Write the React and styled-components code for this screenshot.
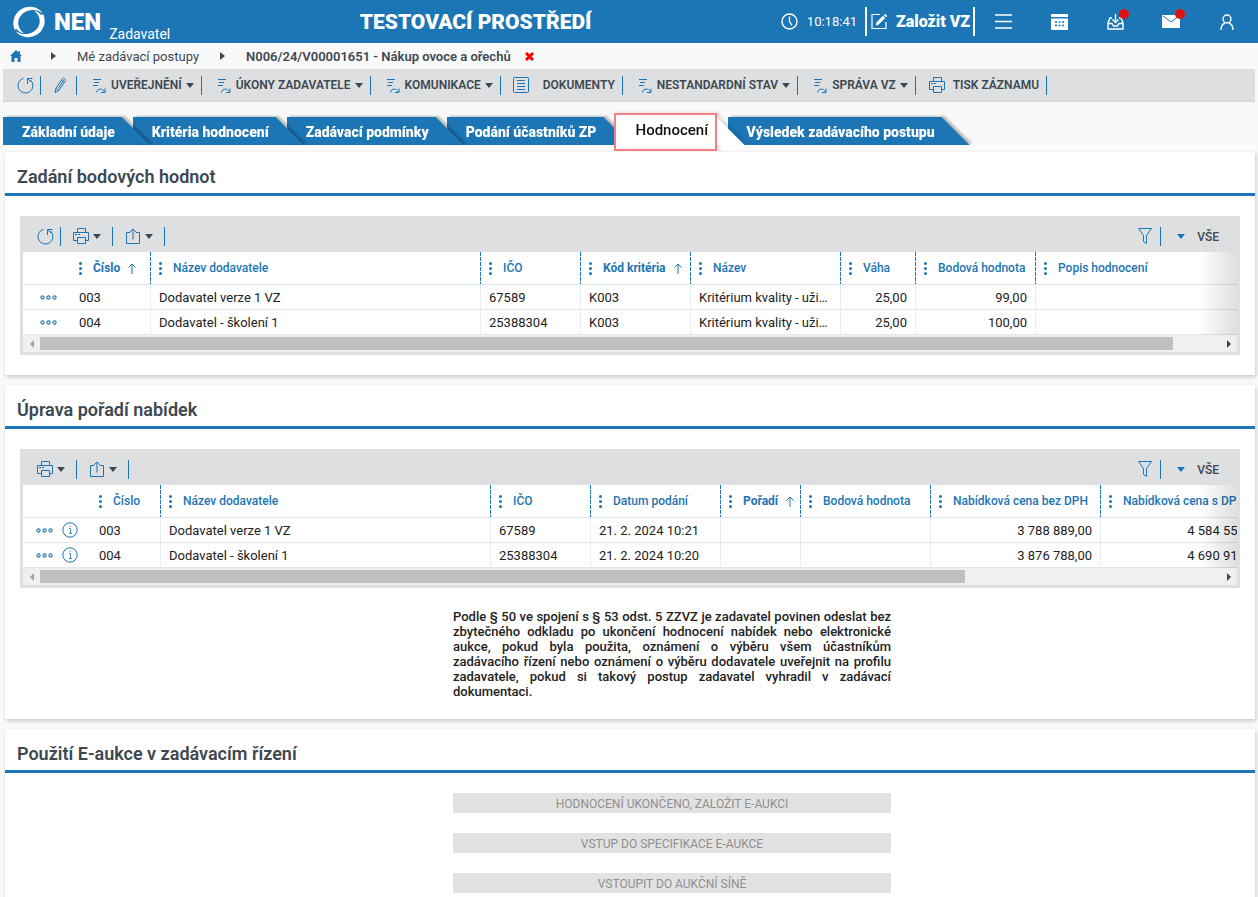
import React from "react";
import styled, { createGlobalStyle, css } from "styled-components";

const blue = "#1c75b4";
const dark = "#3d4851";
const grey = "#dedfe1";
const line = "#dfe8ee";

const GlobalStyle = createGlobalStyle`
  *, *::before, *::after { box-sizing: border-box; }
  body {
    margin: 0;
    background: #f9f9f9;
    color: #222;
    font-family: Roboto, "Liberation Sans", sans-serif;
    font-size: 13px;
  }
  button { font: inherit; color: inherit; background: none; border: 0; padding: 0; }
  a { color: inherit; text-decoration: none; }
  h1, h2, p { margin: 0; }
  svg { display: block; flex: none; }
`;

/* ---------- icons ---------- */

const Icon = ({ w = 16, h = 16, sw = 1, children, ...rest }) => (
  <svg width={w} height={h} viewBox={`0 0 ${w} ${h}`} fill="none" stroke="currentColor" strokeWidth={sw} aria-hidden="true" {...rest}>
    {children}
  </svg>
);

const crescent = "M2.800 24.500A16 16 0 0 1 30 8C24 3.500 16 3.800 10.800 8C6 12 4.200 18 5.500 24.500C4.500 23 3.500 23 2.800 24.500z";
const LogoIcon = () => (
  <svg width="34" height="34" viewBox="0 0 33 33" fill="#fff" aria-hidden="true">
    <path d={crescent} />
    <path d={crescent} transform="rotate(180 16.500 16.500)" />
    <path d="M9 9C4.500 14 5 23 11.500 27.500C8 27 5 24.500 3.500 21.500L3 14z" />
    <path d="M24 24C28.500 19 28 10 21.500 5.500C25 6 28 8.500 29.500 11.500L30 19z" />
  </svg>
);
const RefreshIcon = () => (
  <Icon w={17} h={17}>
    <path d="M6.500 1.300A7.500 7.500 0 1 0 13.500 3" />
    <path d="M15.500 1.500h-5v5.500M10.800 1.800l3.200 3.200" />
  </Icon>
);
const PencilIcon = () => (
  <Icon w={13} h={17}>
    <path d="M1 15.500l.8-4L8.300 1.800c1-1.400 4 .4 3 2.200L4.800 13.500zM1.800 11.500l3 2M9.500 3.500l-5.300 8M7.300 3.200l3 2" />
  </Icon>
);
const ActionIcon = () => (
  <Icon w={14} h={15}>
    <path d="M1 1.500h8M2 4.500h5M1 7.500h5" />
    <path d="M4.500 14.500c1-4.500 6-4.500 8-.5M13 10.500v4h-4" />
  </Icon>
);
const DocIcon = () => (
  <Icon w={16} h={16}>
    <rect x="0.5" y="0.5" width="15" height="15" rx="1" />
    <path d="M4 3.500h8M4 6.500h8M4 9.500h8M4 12.500h8" />
  </Icon>
);
const PrinterIcon = () => (
  <Icon w={16} h={17}>
    <path d="M4.500 4.500v-4h8v4M4.500 12.500h-4v-8h15v8h-3M4.500 9.500h8v6h-8z" />
    <path d="M2 6.500h2M5 6.500h2" />
  </Icon>
);
const ShareIcon = () => (
  <Icon w={14} h={17}>
    <path d="M4 4.500H.5v11h13v-11H10M7 11.500V1M4 4l3-3 3 3" />
  </Icon>
);
const FunnelIcon = () => (
  <Icon w={14} h={17}>
    <path d="M.5.500h13l-5 7v8l-3-2v-6z" />
  </Icon>
);
const SortUpIcon = () => (
  <Icon w={8} h={11}>
    <path d="M4 11V1M.5 4.500L4 1l3.500 3.500" />
  </Icon>
);
const DotsIcon = () => (
  <Icon w={17} h={5} sw={1.1}>
    <circle cx="2.5" cy="2.5" r="1.600" />
    <circle cx="8.500" cy="2.500" r="1.600" />
    <circle cx="14.500" cy="2.500" r="1.600" />
  </Icon>
);
const InfoIcon = () => (
  <Icon w={16} h={16}>
    <circle cx="8" cy="8" r="7.200" />
    <path d="M7 6.500h1.500v5M7 11.500h3M8 3.500v1.500" strokeWidth=".8" />
  </Icon>
);
const MenuHandle = () => (
  <svg width="3" height="13" viewBox="0 0 3 13" fill={blue} aria-hidden="true">
    <circle cx="1.500" cy="1.500" r="1.500" />
    <circle cx="1.500" cy="6.500" r="1.500" />
    <circle cx="1.500" cy="11.500" r="1.500" />
  </svg>
);
const ClockIcon = () => (
  <Icon w={17} h={17} sw={1.4}>
    <circle cx="8.500" cy="8.500" r="7.500" />
    <path d="M8.500 3.500v5l2.500 4" />
  </Icon>
);
const EditIcon = () => (
  <Icon w={17} h={17} sw={1.2}>
    <path d="M9 1.500H1v14h14V9" />
    <path d="M5.500 9.500l6.500-6.500 2 2-6.500 6.500-2.500.5zM13 2l1-1 2 2-1 1z" fill="currentColor" strokeWidth=".5" />
  </Icon>
);
const BurgerIcon = () => (
  <Icon w={17} h={15} sw={1.5}>
    <path d="M0 1h17M0 7.500h17M0 14h17" />
  </Icon>
);
const CalendarIcon = () => (
  <Icon w={17} h={16}>
    <path d="M0 0h17v3H0zM0 4.500h17V16H0z" fill="currentColor" stroke="none" />
    <path d="M4 8h2M7.500 8h2M11 8h2M4 11.500h2M7.500 11.500h2M11 11.500h2" stroke={blue} strokeWidth="1.500" />
  </Icon>
);
const InboxIcon = () => (
  <Icon w={17} h={16} sw={1.4}>
    <path d="M5 4H3L1 9v6h15V9l-2-5h-2M1 9.500h4l1.500 2.500h4L12 9.500h4M8.500 0v8.500M5.500 5.500l3 3 3-3" />
  </Icon>
);
const MailIcon = () => (
  <Icon w={18} h={13}>
    <path d="M0 0h18v13H0z" fill="currentColor" stroke="none" />
    <path d="M1 1l8 6 8-6" stroke={blue} />
  </Icon>
);
const UserIcon = () => (
  <Icon w={14} h={16} sw={1.4}>
    <circle cx="7" cy="5" r="4" />
    <path d="M1 16c0-3.500 1.500-6 4-7M13 16c0-3.500-1.500-6-4-7" />
  </Icon>
);

/* ---------- header ---------- */

const Header = styled.header`
  display: flex;
  align-items: center;
  height: 43px;
  padding: 0 3px 0 12px;
  background: ${blue};
  color: #fff;
`;
const Brand = styled.a`
  display: flex;
  align-items: center;
  height: 43px;
`;
const BrandName = styled.span`
  margin: 0 8px;
  font-size: 24px;
  font-weight: 900;
`;
const BrandRole = styled.span`
  align-self: flex-end;
  font-size: 14px;
  line-height: 18px;
`;
const Environment = styled.h1`
  flex: 1;
  text-align: center;
  font-size: 21px;
  font-weight: 900;
  line-height: 24px;
`;
const Clock = styled.time`
  display: flex;
  align-items: center;
  gap: 9px;
  margin-right: 8px;
  font-size: 13px;
`;
const CreateButton = styled.button`
  display: flex;
  align-items: center;
  gap: 8px;
  height: 29px;
  padding: 0 3px 0 4px;
  border: solid #fff;
  border-width: 0 2px;
  font-size: 16px;
  font-weight: 900;
`;
const HeaderButton = styled.button`
  position: relative;
  display: grid;
  place-items: center;
  width: 56px;
  height: 43px;
`;
const Badge = styled.span`
  position: absolute;
  top: 9px;
  right: 14px;
  width: 10px;
  height: 10px;
  border-radius: 50%;
  background: #e01010;
`;

/* ---------- breadcrumb ---------- */

const Breadcrumb = styled.nav`
  display: flex;
  align-items: center;
  height: 26px;
  padding-left: 10px;
  color: ${dark};
`;
const HomeLink = styled.a`
  color: ${blue};
`;
const CrumbArrow = styled.span`
  margin: 0 21px;
  border: solid transparent;
  border-width: 4px 0 4px 5px;
  border-left-color: ${dark};
  &:first-of-type { margin-left: 29px; }
`;
const Crumb = styled.a`
  font-weight: ${(p) => (p.$current ? 600 : 400)};
`;
const CloseButton = styled.button`
  margin-left: 14px;
  color: #f00;
`;

/* ---------- toolbars ---------- */

const Toolbar = styled.div`
  display: flex;
  align-items: center;
  height: 33px;
  margin: 0 3px;
  padding-left: 14px;
  border-bottom: 1px solid #d2d3d5;
  background: ${grey};
`;
const ToolButton = styled.button`
  display: flex;
  align-items: center;
  height: 19px;
  gap: ${(p) => p.$gap || 5}px;
  padding: 0 ${(p) => p.$right ?? 7}px 0 ${(p) => p.$left ?? 15}px;
  border-right: 1px solid ${blue};
  color: ${blue};
`;
const ToolLabel = styled.span`
  display: flex;
  align-items: center;
  gap: 4px;
  color: ${dark};
  font-size: 12px;
  font-weight: 600;
  text-transform: uppercase;
`;
const Caret = styled.span`
  border: solid transparent;
  border-width: 5px 4px 0;
  border-top-color: ${(p) => p.$color || dark};
`;

/* ---------- tabs ---------- */

const Tabs = styled.nav`
  display: flex;
  align-items: flex-end;
  height: 48px;
  margin: 0 3px;
  padding-bottom: 5px;
  background: linear-gradient(#fff, #fff) bottom / 100% 5px no-repeat;
`;
const Tab = styled.a`
  position: relative;
  z-index: ${(p) => p.$z};
  margin-right: -17px;
  filter: drop-shadow(3px -1px 1px rgba(0, 0, 0, 0.25));
  color: #fff;
  font-size: 14px;
  font-weight: 900;
`;
const slope = css`
  clip-path: polygon(0 0, calc(100% - 28px) 0, 100% 100%, 0 100%);
`;
const TabShape = styled.span`
  display: block;
  height: 28px;
  padding: 0 35px 0 19px;
  line-height: 30px;
  background: ${blue};
  ${slope}
`;
const ActiveTab = styled(Tab)`
  filter: drop-shadow(3px -1px 1px rgba(0, 0, 0, 0.1));
`;
const ActiveShape = styled.span`
  display: block;
  width: 130px;
  height: 28px;
  background: #fff;
  ${slope}
`;
const ActiveFrame = styled.span`
  position: absolute;
  inset: -4px 28px -6px -1px;
  padding-left: 20px;
  border: 2px solid #f77f82;
  background: #fff;
  color: #111;
  font-size: 15px;
  font-weight: 500;
  line-height: 30px;
`;

/* ---------- panels ---------- */

const Panels = styled.main`
  display: grid;
  gap: 10px;
  padding: 2px 3px 0 5px;
`;
const Panel = styled.section`
  min-width: 0;
  padding-bottom: ${(p) => p.$bottom ?? 20}px;
  background: #fff;
  box-shadow: 1px 2px 4px rgba(0, 0, 0, 0.2);
`;
const PanelTitle = styled.h2`
  height: 44px;
  padding: 4px 12px 0;
  border-bottom: 3px solid ${blue};
  color: ${dark};
  font-size: 18px;
  font-weight: 600;
  line-height: 41px;
`;
const Centered = styled.div`
  display: grid;
  grid-template-columns: minmax(0, 448fr) minmax(0, 438fr) minmax(0, 364fr);
  row-gap: 20px;
  margin-top: ${(p) => p.$top ?? 20}px;
  > * { grid-column: 2; }
`;
const Note = styled.p`
  color: #222;
  font-size: 13px;
  font-weight: 500;
  line-height: 15px;
  text-align: justify;
`;
const DisabledButton = styled.button`
  height: 20px;
  padding-top: 1px;
  background: #e2e2e2;
  color: #8f8f8f;
  font-size: 12px;
  text-transform: uppercase;
`;

/* ---------- data grid ---------- */

const Grid = styled.div`
  margin: 20px 15px 0;
  border: 3px solid ${grey};
  border-top: 0;
`;
const GridToolbar = styled.div`
  display: flex;
  align-items: center;
  height: 36px;
  padding: 4px 18px 0 14px;
  background: ${grey};
`;
const GridTool = styled(ToolButton)`
  gap: ${(p) => p.$gap || 4}px;
  padding-right: ${(p) => p.$right ?? 11}px;
`;
const Spacer = styled.span`
  flex: 1;
`;
const ViewButton = styled.button`
  display: flex;
  align-items: center;
  gap: 12px;
  padding: 1px 0 0 16px;
  color: ${dark};
  font-size: 12px;
  font-weight: 500;
`;
const Viewport = styled.div`
  position: relative;
  overflow: hidden;
  &::after {
    content: "";
    position: absolute;
    inset: 0 0 0 auto;
    width: 38px;
    background: linear-gradient(to right, transparent, rgba(0, 0, 0, 0.13));
  }
`;
const Table = styled.table`
  width: ${(p) => p.$width}px;
  table-layout: fixed;
  border-collapse: separate;
  border-spacing: 0;
`;
const HeadCell = styled.th`
  height: 33px;
  padding: 0 0 0 8px;
  border-bottom: 1px solid ${line};
  background: ${(p) =>
    p.$plain ? "none" : `repeating-linear-gradient(${blue} 0 4px, transparent 4px 5px) right / 1px 100% no-repeat`};
  color: ${blue};
  font-size: 12px;
  font-weight: ${(p) => (p.$sorted ? 700 : 500)};
  text-align: left;
  white-space: nowrap;
`;
const HeadContent = styled.span`
  display: flex;
  align-items: center;
  gap: 11px;
`;
const HeadText = styled.span`
  display: flex;
  align-items: center;
  gap: 8px;
`;
const Cell = styled.td`
  height: 25px;
  padding: 2px 8px 0;
  overflow: hidden;
  border-bottom: 1px solid ${line};
  border-right: ${(p) => (p.$plain ? "0" : "1px dotted #d5dde2")};
  font-size: 13px;
  line-height: 22px;
  text-align: ${(p) => (p.$right ? "right" : "left")};
  text-overflow: ellipsis;
  white-space: nowrap;
`;
const ActionCell = styled(Cell)`
  padding: 0 8px;
`;
const RowActions = styled.span`
  display: flex;
  align-items: center;
  justify-content: ${(p) => (p.$info ? "flex-start" : "center")};
  gap: 9px;
  padding-left: ${(p) => (p.$info ? 5 : 2)}px;
  color: ${blue};
`;
const ScrollBar = styled.div`
  display: grid;
  grid-template-columns: 17px 1fr 17px;
  height: 17px;
  background: #f0f0f0;
`;
const ScrollButton = styled.button`
  display: grid;
  place-items: center;
  &::before {
    content: "";
    border: solid transparent;
    border-width: 4px ${(p) => (p.$next ? "0 4px 4px" : "4px 4px 0")};
    border-${(p) => (p.$next ? "left" : "right")}-color: ${(p) => (p.$next ? "#444" : "#a0a0a0")};
  }
`;
const ScrollThumb = styled.div`
  height: 13px;
  margin-top: 2px;
  background: #c0c0c0;
`;

function DataGrid({ refresh, info, firstWidth, width, columns, rows }) {
  return (
    <Grid>
      <GridToolbar>
        {refresh && (
          <GridTool $left={0} $right={6} aria-label="Obnovit"><RefreshIcon /></GridTool>
        )}
        <GridTool $left={refresh ? 12 : 0} aria-label="Tisk"><PrinterIcon /><Caret /></GridTool>
        <GridTool $left={13} $gap={5} aria-label="Export"><ShareIcon /><Caret /></GridTool>
        <Spacer />
        <GridTool $left={0} $right={8} aria-label="Filtr"><FunnelIcon /></GridTool>
        <ViewButton><Caret $color={blue} />VŠE</ViewButton>
      </GridToolbar>
      <Viewport>
        <Table $width={width}>
          <colgroup>
            <col width={firstWidth} />
            {columns.map((c) => <col key={c.label} width={c.width} />)}
            <col />
          </colgroup>
          <thead>
            <tr>
              <HeadCell $plain />
              {columns.map((c) => (
                <HeadCell key={c.label} $sorted={c.sorted} $plain={c.last}>
                  <HeadContent>
                    <MenuHandle />
                    <HeadText>{c.label}{c.sorted && <SortUpIcon />}</HeadText>
                  </HeadContent>
                </HeadCell>
              ))}
              <HeadCell $plain />
            </tr>
          </thead>
          <tbody>
            {rows.map((row) => (
              <tr key={row[0]}>
                <ActionCell $plain>
                  <RowActions $info={info}>
                    <button aria-label="Akce"><DotsIcon /></button>
                    {info && <button aria-label="Informace"><InfoIcon /></button>}
                  </RowActions>
                </ActionCell>
                {row.map((value, i) => (
                  <Cell key={columns[i].label} $right={columns[i].right} $plain={columns[i].last}>{value}</Cell>
                ))}
                <Cell $plain />
              </tr>
            ))}
          </tbody>
        </Table>
      </Viewport>
      <ScrollBar>
        <ScrollButton aria-label="Posunout vlevo" />
        <ScrollThumb style={{ width: `${(100 * 1214) / width}%` }} />
        <ScrollButton $next aria-label="Posunout vpravo" />
      </ScrollBar>
    </Grid>
  );
}

const scoreColumns = [
  { label: "Číslo", width: 80, sorted: true },
  { label: "Název dodavatele", width: 330 },
  { label: "IČO", width: 100 },
  { label: "Kód kritéria", width: 110, sorted: true },
  { label: "Název", width: 150 },
  { label: "Váha", width: 75, right: true },
  { label: "Bodová hodnota", width: 120, right: true },
  { label: "Popis hodnocení", width: 200, last: true },
];
const scoreRows = [
  ["003", "Dodavatel verze 1 VZ", "67589", "K003", "Kritérium kvality - uživatelské", "25,00", "99,00", ""],
  ["004", "Dodavatel - školení 1", "25388304", "K003", "Kritérium kvality - uživatelské", "25,00", "100,00", ""],
];
const offerColumns = [
  { label: "Číslo", width: 70 },
  { label: "Název dodavatele", width: 330 },
  { label: "IČO", width: 100 },
  { label: "Datum podání", width: 130 },
  { label: "Pořadí", width: 80, sorted: true },
  { label: "Bodová hodnota", width: 130 },
  { label: "Nabídková cena bez DPH", width: 170, right: true },
  { label: "Nabídková cena s DPH", width: 170, right: true },
];
const offerRows = [
  ["003", "Dodavatel verze 1 VZ", "67589", "21. 2. 2024 10:21", "", "", "3 788 889,00", "4 584 555,69"],
  ["004", "Dodavatel - školení 1", "25388304", "21. 2. 2024 10:20", "", "", "3 876 788,00", "4 690 913,48"],
];

const menus = ["Uveřejnění", "Úkony zadavatele", "Komunikace"];
const moreMenus = ["Nestandardní stav", "Správa VZ"];

const MenuButton = ({ label }) => (
  <ToolButton>
    <ActionIcon />
    <ToolLabel>{label}<Caret /></ToolLabel>
  </ToolButton>
);

export default function App() {
  return (
    <>
      <GlobalStyle />
      <Header>
        <Brand href="#">
          <LogoIcon />
          <BrandName>NEN</BrandName>
          <BrandRole>Zadavatel</BrandRole>
        </Brand>
        <Environment>TESTOVACÍ PROSTŘEDÍ</Environment>
        <Clock><ClockIcon />10:18:41</Clock>
        <CreateButton><EditIcon />Založit VZ</CreateButton>
        <HeaderButton aria-label="Menu"><BurgerIcon /></HeaderButton>
        <HeaderButton aria-label="Kalendář"><CalendarIcon /></HeaderButton>
        <HeaderButton aria-label="Doručené"><InboxIcon /><Badge /></HeaderButton>
        <HeaderButton aria-label="Zprávy"><MailIcon /><Badge /></HeaderButton>
        <HeaderButton aria-label="Uživatel"><UserIcon /></HeaderButton>
      </Header>

      <Breadcrumb>
        <HomeLink href="#" aria-label="Domů">
          <svg width="12" height="12" viewBox="0 0 12 12" fill="currentColor">
            <path d="M6 0L0 6h1.500v6h3V8h3v4h3V6H12L10 4V1H8.500v1.500z" />
          </svg>
        </HomeLink>
        <CrumbArrow />
        <Crumb href="#">Mé zadávací postupy</Crumb>
        <CrumbArrow />
        <Crumb href="#" $current>N006/24/V00001651 - Nákup ovoce a ořechů</Crumb>
        <CloseButton aria-label="Zavřít">
          <Icon w={9} h={9} sw={3}><path d="M1 1l7 7M8 1L1 8" /></Icon>
        </CloseButton>
      </Breadcrumb>

      <Toolbar>
        <ToolButton $left={0} $right={6} aria-label="Obnovit"><RefreshIcon /></ToolButton>
        <ToolButton $left={13} $right={9} aria-label="Upravit"><PencilIcon /></ToolButton>
        {menus.map((m) => <MenuButton key={m} label={m} />)}
        <ToolButton $left={12} $gap={14}><DocIcon /><ToolLabel>Dokumenty</ToolLabel></ToolButton>
        {moreMenus.map((m) => <MenuButton key={m} label={m} />)}
        <ToolButton $left={13} $gap={8}><PrinterIcon /><ToolLabel>Tisk záznamu</ToolLabel></ToolButton>
      </Toolbar>

      <Tabs>
        <Tab href="#" $z={6}><TabShape>Základní údaje</TabShape></Tab>
        <Tab href="#" $z={5}><TabShape>Kritéria hodnocení</TabShape></Tab>
        <Tab href="#" $z={4}><TabShape>Zadávací podmínky</TabShape></Tab>
        <Tab href="#" $z={3}><TabShape>Podání účastníků ZP</TabShape></Tab>
        <ActiveTab href="#" $z={7} aria-current="page">
          <ActiveShape />
          <ActiveFrame>Hodnocení</ActiveFrame>
        </ActiveTab>
        <Tab href="#" $z={1}><TabShape>Výsledek zadávacího postupu</TabShape></Tab>
      </Tabs>

      <Panels>
        <Panel>
          <PanelTitle>Zadání bodových hodnot</PanelTitle>
          <DataGrid refresh firstWidth={48} width={1264} columns={scoreColumns} rows={scoreRows} />
        </Panel>
        <Panel>
          <PanelTitle>Úprava pořadí nabídek</PanelTitle>
          <DataGrid info firstWidth={68} width={1549} columns={offerColumns} rows={offerRows} />
          <Centered $top={21}>
            <Note>
              Podle § 50 ve spojení s § 53 odst. 5 ZZVZ je zadavatel povinen odeslat bez zbytečného odkladu po ukončení
              hodnocení nabídek nebo elektronické aukce, pokud byla použita, oznámení o výběru všem účastníkům
              zadávacího řízení nebo oznámení o výběru dodavatele uveřejnit na profilu zadavatele, pokud si takový
              postup zadavatel vyhradil v zadávací dokumentaci.
            </Note>
          </Centered>
        </Panel>
        <Panel $bottom={4}>
          <PanelTitle>Použití E-aukce v zadávacím řízení</PanelTitle>
          <Centered>
            <DisabledButton disabled>Hodnocení ukončeno, založit e-aukci</DisabledButton>
            <DisabledButton disabled>Vstup do specifikace e-aukce</DisabledButton>
            <DisabledButton disabled>Vstoupit do aukční síně</DisabledButton>
          </Centered>
        </Panel>
      </Panels>
    </>
  );
}
